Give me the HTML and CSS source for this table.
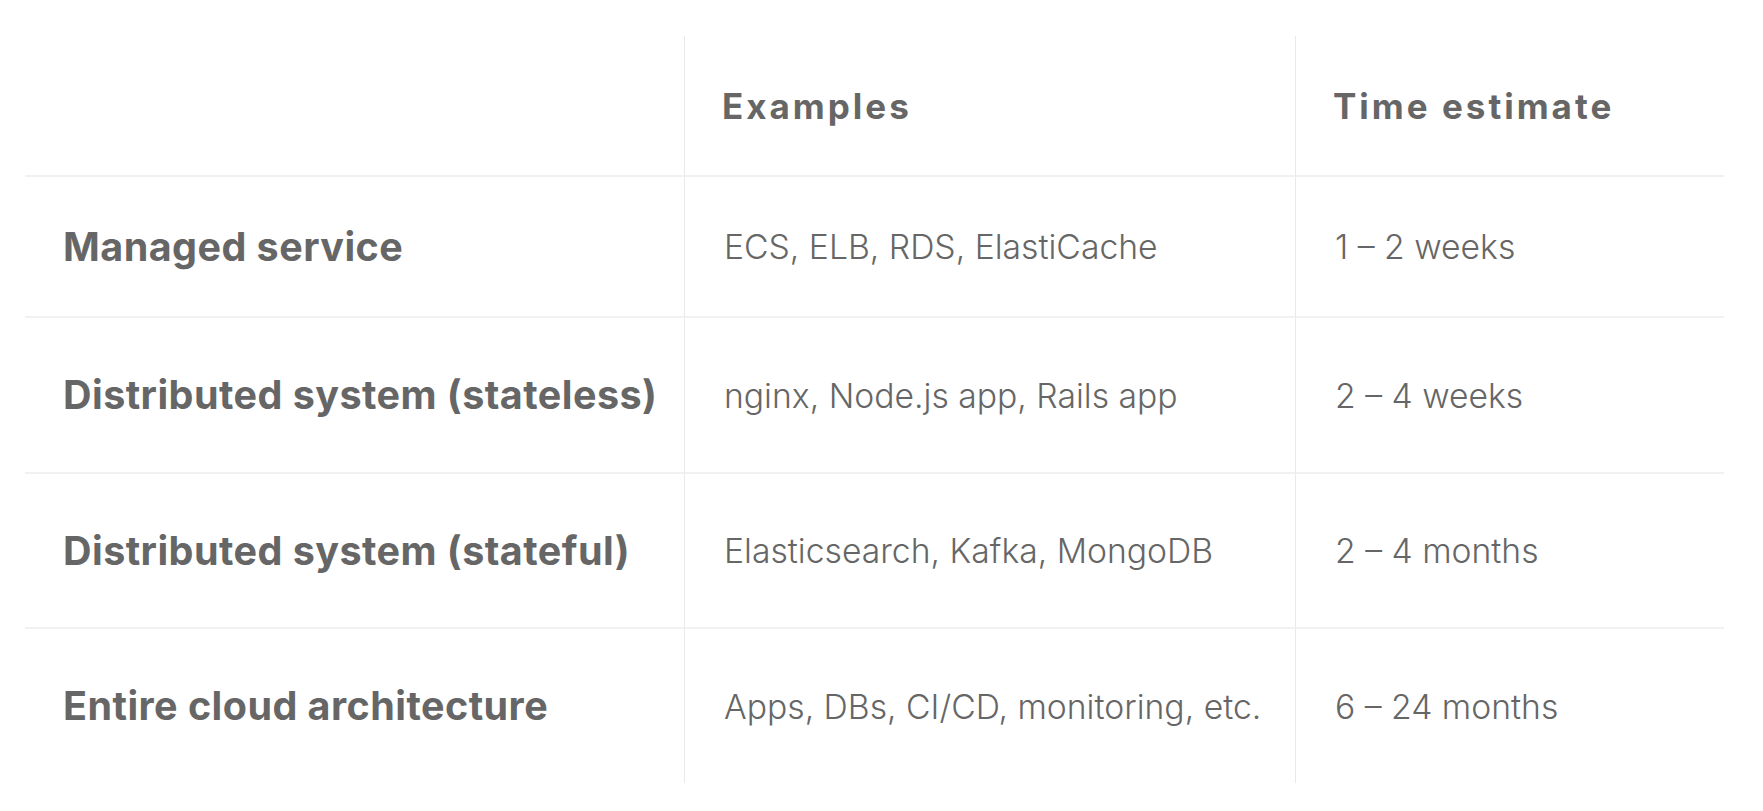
FILE: index.html
```html
<!DOCTYPE html>
<html lang="en">
<head>
<meta charset="utf-8">
<title>Time estimates</title>
<link rel="stylesheet" href="styles.css">
</head>
<body>
<div class="table">
  <div class="cell head"></div>
  <div class="cell head">Examples</div>
  <div class="cell head last-col">Time estimate</div>

  <div class="cell label">Managed service</div>
  <div class="cell">ECS, ELB, RDS, ElastiCache</div>
  <div class="cell last-col">1 – 2 weeks</div>

  <div class="cell label">Distributed system (stateless)</div>
  <div class="cell">nginx, Node.js app, Rails app</div>
  <div class="cell last-col">2 – 4 weeks</div>

  <div class="cell label">Distributed system (stateful)</div>
  <div class="cell">Elasticsearch, Kafka, MongoDB</div>
  <div class="cell last-col">2 – 4 months</div>

  <div class="cell label last-row">Entire cloud architecture</div>
  <div class="cell last-row">Apps, DBs, CI/CD, monitoring, etc.</div>
  <div class="cell last-row last-col">6 – 24 months</div>
</div>
</body>
</html>
```
FILE: styles.css
```css
html, body {
  margin: 0;
  background: #ffffff;
}

body {
  font-family: "Inter", "Noto Sans", sans-serif;
  color: #666666;
}

.table {
  display: grid;
  grid-template-columns: 660px 611px 428px;
  grid-template-rows: 141px 141px 156px 155px 154px;
  margin: 36px 0 0 25px;
  width: 1699px;
}

.cell {
  display: flex;
  align-items: center;
  padding-left: 39px;
  box-sizing: border-box;
  border-right: 1px solid #e9e9e9;
  border-bottom: 2px solid #f1f1f1;
  font-size: 33.7px;
  font-weight: 300;
  white-space: nowrap;
}

.cell.last-col {
  border-right: none;
}

.cell.last-row {
  border-bottom: none;
}

.cell.head {
  padding-left: 37px;
  font-size: 35px;
  font-weight: 700;
  letter-spacing: 3px;
}

.cell.label {
  padding-left: 38px;
  font-size: 39.5px;
  font-weight: 700;
  letter-spacing: 0.45px;
}
```
